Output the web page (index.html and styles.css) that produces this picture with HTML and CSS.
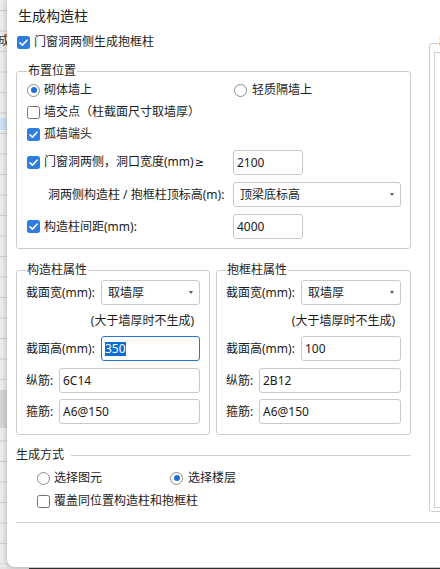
FILE: index.html
```html
<!DOCTYPE html>
<html lang="zh-CN">
<head>
<meta charset="utf-8">
<title>生成构造柱</title>
<link rel="stylesheet" href="styles.css">
</head>
<body>
<div class="desk">
  <div class="app-strip">
    <div class="strip-label">生成</div>
    <div class="strip-sel"></div>
    <div class="strip-dark"></div>
  </div>
  <div class="dialog">
    <div class="dlg-title">生成构造柱</div>
    <div class="dlg-body">
      <div class="main">
        <div class="chk-row top-check">
          <svg class="cb" viewBox="0 0 13 13" width="13" height="13"><rect width="13" height="13" rx="2.5" fill="#2e7de1"/><path d="M3 6.8 L5.4 9.1 L10 4.2" fill="none" stroke="#fff" stroke-width="1.6" stroke-linecap="round" stroke-linejoin="round"/></svg>
          <span>门窗洞两侧生成抱框柱</span>
        </div>

        <fieldset class="grp grp-pos">
          <legend>布置位置</legend>
          <div class="line h22">
            <div class="lcol"><span class="rb on"></span><span>砌体墙上</span></div>
            <div class="rcol"><span class="rb rb-col2"></span><span>轻质隔墙上</span></div>
          </div>
          <div class="line h22">
            <div class="lcol wide"><span class="cb off"></span><span>墙交点（柱截面尺寸取墙厚）</span></div>
          </div>
          <div class="line h22">
            <div class="lcol"><svg class="cb" viewBox="0 0 13 13" width="13" height="13"><rect width="13" height="13" rx="2.5" fill="#2e7de1"/><path d="M3 6.8 L5.4 9.1 L10 4.2" fill="none" stroke="#fff" stroke-width="1.6" stroke-linecap="round" stroke-linejoin="round"/></svg><span>孤墙端头</span></div>
          </div>
          <div class="line mt5">
            <div class="lcol"><svg class="cb" viewBox="0 0 13 13" width="13" height="13"><rect width="13" height="13" rx="2.5" fill="#2e7de1"/><path d="M3 6.8 L5.4 9.1 L10 4.2" fill="none" stroke="#fff" stroke-width="1.6" stroke-linecap="round" stroke-linejoin="round"/></svg><span>门窗洞两侧，洞口宽度(mm)<span class="ge">≥</span></span></div>
            <div class="inp w70">2100</div>
          </div>
          <div class="line mt7">
            <div class="lcol indent"><span>洞两侧构造柱 / 抱框柱顶标高(m):</span></div>
            <div class="inp sel w168"><span>顶梁底标高</span><span class="caret"></span></div>
          </div>
          <div class="line mt7">
            <div class="lcol"><svg class="cb" viewBox="0 0 13 13" width="13" height="13"><rect width="13" height="13" rx="2.5" fill="#2e7de1"/><path d="M3 6.8 L5.4 9.1 L10 4.2" fill="none" stroke="#fff" stroke-width="1.6" stroke-linecap="round" stroke-linejoin="round"/></svg><span>构造柱间距(mm):</span></div>
            <div class="inp w70">4000</div>
          </div>
        </fieldset>

        <div class="grp-row">
          <fieldset class="grp grp-sm w194">
            <legend>构造柱属性</legend>
            <div class="line mt2">
              <span class="lab75">截面宽(mm):</span>
              <div class="inp sel grow"><span>取墙厚</span><span class="caret"></span></div>
            </div>
            <div class="note">(大于墙厚时不生成)</div>
            <div class="line mt5">
              <span class="lab75">截面高(mm):</span>
              <div class="inp grow focus"><span class="hl">350</span></div>
            </div>
            <div class="line mt7">
              <span class="lab33">纵筋:</span>
              <div class="inp grow">6C14</div>
            </div>
            <div class="line mt6">
              <span class="lab33">箍筋:</span>
              <div class="inp grow">A6@150</div>
            </div>
          </fieldset>
          <fieldset class="grp grp-sm w195">
            <legend>抱框柱属性</legend>
            <div class="line mt2">
              <span class="lab75">截面宽(mm):</span>
              <div class="inp sel grow"><span>取墙厚</span><span class="caret"></span></div>
            </div>
            <div class="note">(大于墙厚时不生成)</div>
            <div class="line mt5">
              <span class="lab75">截面高(mm):</span>
              <div class="inp grow">100</div>
            </div>
            <div class="line mt7">
              <span class="lab33">纵筋:</span>
              <div class="inp grow">2B12</div>
            </div>
            <div class="line mt6">
              <span class="lab33">箍筋:</span>
              <div class="inp grow">A6@150</div>
            </div>
          </fieldset>
        </div>

        <div class="mode-head">生成方式</div>
        <div class="mode-opts">
          <div class="opt-row">
            <div class="opt"><span class="rb"></span><span>选择图元</span></div>
            <div class="opt"><span class="rb on"></span><span class="gap1">选择楼层</span></div>
          </div>
          <div class="opt-row">
            <div class="opt wide"><span class="cb off"></span><span>覆盖同位置构造柱和抱框柱</span></div>
          </div>
        </div>
      </div>

      <fieldset class="side-grp">
        <legend>楼层列表</legend>
        <div class="side-list"></div>
      </fieldset>
    </div>
    <div class="hr"></div>
  </div>
</div>
<div class="taskline"></div>
</body>
</html>
```

FILE: styles.css
```css
html, body {
  margin: 0;
  padding: 0;
}

body {
  width: 440px;
  height: 569px;
  overflow: hidden;
  background: #e2e2e2;
  font-family: "Noto Sans", "Noto Sans CJK SC", sans-serif;
  font-size: 12px;
  line-height: 16px;
  color: #1c1c1c;
}

.desk {
  display: flex;
  height: 567px;
}

/* background application strip at the far left */
.app-strip {
  width: 7px;
  flex-shrink: 0;
  overflow: hidden;
  background-color: #ececec;
  background-image: linear-gradient(to bottom, #ededed 0, #ededed 19.5px, #d0d0d0 19.5px, #d0d0d0 20.5px);
  background-size: 100% 20.5px;
  background-position: 0 11px;
}

.strip-label {
  margin-top: 32px;
  height: 18px;
  line-height: 18px;
  font-size: 12px;
  white-space: nowrap;
  margin-left: -14px;
  color: #333;
}

.strip-sel {
  margin-top: 68px;
  height: 12px;
  background: #cde0f4;
}

.strip-dark {
  margin-top: 260px;
  height: 38px;
  background: #d6d6d6;
}

/* dialog */
.dialog {
  flex-shrink: 0;
  width: 620px;
  height: 567px;
  box-sizing: border-box;
  padding-left: 9px;
  background: #fff;
  border-bottom-left-radius: 8px;
  box-shadow: 0 0 6px rgba(0, 0, 0, 0.28);
}

.dlg-title {
  margin-top: 6px;
  padding-left: 2px;
  line-height: 20px;
  font-size: 14px;
  color: #222;
}

.dlg-body {
  display: flex;
  margin-top: 6px;
}

.main {
  width: 395px;
  flex-shrink: 0;
}

/* checkboxes and radios */
.cb {
  width: 13px;
  height: 13px;
  flex-shrink: 0;
  display: block;
}

.cb.off {
  box-sizing: border-box;
  border: 1px solid #727272;
  border-radius: 2.5px;
  background: #fff;
}

.rb {
  width: 13px;
  height: 13px;
  box-sizing: border-box;
  border: 1px solid #8c8c8c;
  border-radius: 50%;
  display: flex;
  align-items: center;
  justify-content: center;
  flex-shrink: 0;
  background: #fff;
}

.rb.on::after {
  content: "";
  width: 6px;
  height: 6px;
  border-radius: 50%;
  background: #1f6fd9;
}

.rb-col2 {
  margin-left: 1px;
}

.chk-row {
  display: flex;
  align-items: center;
  gap: 4px;
  height: 20px;
}

.top-check {
  padding-left: 1px;
}

/* group boxes */
fieldset {
  margin: 0;
  min-width: 0;
  box-sizing: border-box;
}

legend {
  padding: 0 1px;
  line-height: 16px;
  font-size: 12px;
  color: #1c1c1c;
}

.grp {
  border: 1px solid #cdcdcd;
  border-radius: 3px;
}

.grp-pos {
  width: 395px;
  margin-top: 11px;
  padding: 0 8px 9px 10px;
}

.line {
  display: flex;
  align-items: center;
}

.h22 {
  height: 22px;
}

.mt2 { margin-top: 2px; }
.mt5 { margin-top: 5px; }
.mt6 { margin-top: 6px; }
.mt7 { margin-top: 7px; }

.lcol {
  width: 206px;
  flex-shrink: 0;
  display: flex;
  align-items: center;
  gap: 4px;
  white-space: nowrap;
}

.lcol.wide {
  width: auto;
}

.lcol.indent {
  padding-left: 21px;
  box-sizing: border-box;
}

.ge {
  font-family: "DejaVu Sans", sans-serif;
  font-size: 11px;
  margin-left: 1px;
}

.rcol {
  display: flex;
  align-items: center;
  gap: 5px;
}

/* inputs */
.inp {
  height: 25px;
  box-sizing: border-box;
  border: 1px solid #c9c9c9;
  border-radius: 3px;
  padding-left: 3px;
  display: flex;
  align-items: center;
  background: #fff;
  color: #1a1a1a;
  white-space: nowrap;
}

.sel {
  padding: 0 6px 0 6px;
  justify-content: space-between;
}

.caret {
  width: 0;
  height: 0;
  border-left: 2.5px solid transparent;
  border-right: 2.5px solid transparent;
  border-top: 3px solid #5a5a5a;
}

.w70 { width: 70px; }
.w168 { width: 168px; }
.grow { flex: 1; }

.focus {
  border-color: #2a75d3;
}

.hl {
  background: #0c6cd6;
  color: #fff;
  line-height: 14px;
}

.grp-row {
  display: flex;
  gap: 6px;
  margin-top: 13px;
}

.grp-sm {
  padding: 0 9px 10px 9px;
}

.w194 { width: 194px; }
.w195 { width: 195px; }

.lab75 {
  width: 75px;
  flex-shrink: 0;
  white-space: nowrap;
}

.lab33 {
  width: 33px;
  flex-shrink: 0;
  white-space: nowrap;
}

.note {
  margin-top: 6px;
  height: 20px;
  line-height: 20px;
  text-align: right;
  padding-right: 6px;
}

/* generation mode */
.mode-head {
  display: flex;
  align-items: center;
  height: 20px;
  margin-top: 10px;
}

.mode-head::after {
  content: "";
  flex: 1;
  height: 1px;
  margin-left: 7px;
  background: #cfcfcf;
}

.mode-opts {
  padding-left: 21px;
}

.opt-row {
  display: flex;
  align-items: center;
  height: 20px;
  margin-top: 3px;
}

.opt {
  display: flex;
  align-items: center;
  gap: 4px;
  width: 133px;
  white-space: nowrap;
}

.opt.wide {
  width: auto;
}

.gap1 {
  margin-left: 1px;
}

/* side panel (partially visible) */
.side-grp {
  margin: 3px 0 0 18px;
  width: 150px;
  flex-shrink: 0;
  border: 1px solid #cdcdcd;
  border-radius: 3px;
  padding: 0 4px 3px 4px;
}

.side-grp legend {
  margin-left: 4px;
}

.side-list {
  margin-top: 1px;
  height: 456px;
  box-sizing: border-box;
  border: 1px solid #d0d0d0;
}

.hr {
  margin-top: 10px;
  height: 1px;
  background: #cfcfcf;
}

.taskline {
  margin: 1px 0 0 29px;
  height: 1px;
  background: #333;
}
```
